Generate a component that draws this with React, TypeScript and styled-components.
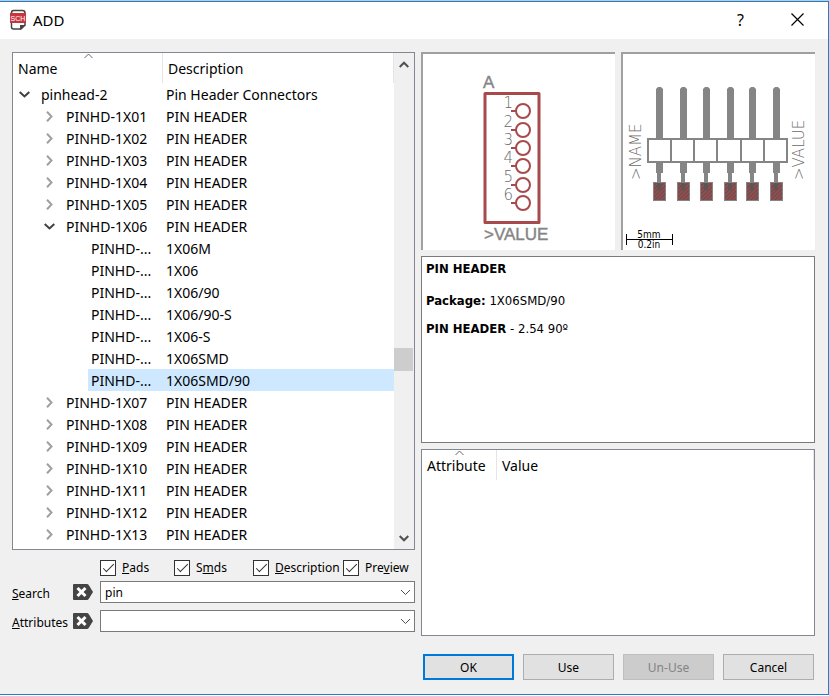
import React, { useState } from 'react';
import styled, { createGlobalStyle, css } from 'styled-components';

const uiFont = '"Noto Sans", "Open Sans", sans-serif';
const infoFont = '"DejaVu Sans Condensed", "DejaVu Sans", sans-serif';

const GlobalStyle = createGlobalStyle`
  *, *::before, *::after { box-sizing: border-box; }
  body { margin: 0; background: #fff; }
  button, input { font: inherit; color: inherit; }
`;

const Dialog = styled.div`
  display: flex;
  flex-direction: column;
  background: #f0f0f0;
  border: solid #1a80d2;
  border-width: 1px 1px 1px 0;
  outline: 1px solid #c8c8c8;
  margin-top: 1px;
  min-height: calc(100vh - 2px);
  font-family: ${uiFont};
  font-size: 12px;
  color: #000;
`;

const TitleBar = styled.header`
  display: flex;
  align-items: center;
  height: 37px;
  padding: 0 2px 2px 9px;
  background: #fff;
`;

const Title = styled.h1`
  flex: 1;
  margin: 0 0 0 6px;
  font: 400 15px/20px ${uiFont};
`;

const CaptionButton = styled.button`
  display: flex;
  align-items: center;
  justify-content: center;
  width: 57px;
  height: 34px;
  padding: 0;
  border: 0;
  background: none;
  font: 400 16px/20px ${uiFont};
`;

const Body = styled.main`
  flex: 1;
  display: grid;
  grid-template-columns: minmax(0, 403fr) minmax(0, 394fr);
  gap: 6px;
  padding: 13px 13px 14px 12px;
`;

const Column = styled.div`
  display: flex;
  flex-direction: column;
  min-width: 0;
`;

const TreePanel = styled.section`
  flex: 1;
  display: flex;
  border: 1px solid #828790;
  background: #fff;
`;

const TreeTable = styled.table`
  flex: 1;
  align-self: flex-start;
  width: calc(100% - 20px);
  table-layout: fixed;
  border-collapse: separate;
  border-spacing: 0;
  font: 400 14px/20px ${uiFont};
`;

const NameCol = styled.col`
  width: 150px;
`;

const HeadCell = styled.th`
  position: relative;
  height: 30px;
  padding: 2px 0 0 5px;
  border-right: 1px solid #e5e5e5;
  text-align: left;
  font-weight: 400;
`;

const SortMark = styled.svg`
  position: absolute;
  top: 0;
  left: calc(50% - 4px);
`;

const Cell = styled.td`
  height: 22px;
  padding: 0;
  white-space: nowrap;
`;

const NameLine = styled.div<{ $level: number }>`
  display: flex;
  align-items: center;
  padding-left: ${p => p.$level * 25}px;
`;

const Toggle = styled.button`
  display: flex;
  align-items: center;
  justify-content: center;
  width: 25px;
  height: 22px;
  padding: 0 2px 0 0;
  border: 0;
  background: none;
`;

const ToggleSpace = styled.span`
  width: 25px;
`;

const CellText = styled.span<{ $selected?: boolean }>`
  display: block;
  flex: 1;
  padding: 2px 0 0 3px;
  ${p => p.$selected && css`background: #cde8ff;`}
`;

const ScrollBar = styled.div`
  display: flex;
  flex-direction: column;
  align-items: center;
  width: 20px;
  background: #f0f0f0;
`;

const ScrollArrow = styled.button`
  display: flex;
  align-items: center;
  justify-content: center;
  width: 20px;
  height: 22px;
  padding: 0;
  border: 0;
  background: none;
`;

const ScrollTrack = styled.div<{ $grow: number }>`
  flex: ${p => p.$grow};
`;

const ScrollThumb = styled.div`
  align-self: stretch;
  height: 23px;
  margin-right: 1px;
  background: #cdcdcd;
`;

const Filters = styled.form`
  display: grid;
  grid-template-columns: 61px 27px minmax(0, 1fr);
  align-items: center;
  row-gap: 7px;
  padding: 9px 0 48px;
`;

const CheckRow = styled.div`
  grid-column: 3;
  display: grid;
  grid-template-columns: 74px 79px 90px auto;
  margin-bottom: -2px;
  line-height: 16px;
`;

const CheckLabel = styled.label`
  display: flex;
  align-items: center;
  gap: 6px;
  white-space: nowrap;
`;

const CheckText = styled.span`
  padding-top: 1px;
`;

const CheckBox = styled.input`
  appearance: none;
  flex: none;
  width: 16px;
  height: 16px;
  margin: 0;
  border: 1px solid #333;
  background: #fff;
  display: grid;
  place-items: center;
  &:checked::before {
    content: '';
    width: 11px;
    height: 5px;
    margin-top: -3px;
    border: solid #333;
    border-width: 0 0 1px 1px;
    transform: rotate(-45deg);
  }
`;

const FieldLabel = styled.label`
  padding-top: 4px;
  line-height: 16px;
`;

const ClearButton = styled.button`
  display: flex;
  padding: 0;
  border: 0;
  background: none;
`;

const Combo = styled.div`
  display: flex;
  height: 22px;
  border: 1px solid #7a7a7a;
  background: #fff;
`;

const ComboInput = styled.input`
  flex: 1;
  min-width: 0;
  padding: 0 4px;
  border: 0;
  outline: 0;
  background: none;
`;

const ComboButton = styled.button`
  display: flex;
  align-items: center;
  justify-content: center;
  width: 18px;
  padding: 0;
  border: 0;
  background: none;
`;

const Previews = styled.div`
  display: grid;
  grid-template-columns: 1fr 1fr;
  gap: 6px;
`;

const Preview = styled.div`
  display: flex;
  height: 198px;
  border: solid #a0a0a0;
  border-width: 2px 0 0 2px;
  background: #fff;
`;

const Drawing = styled.svg`
  width: 100%;
  height: 100%;
`;

const InfoPanel = styled.section`
  flex: 1;
  margin-top: 6px;
  border: 1px solid #7a7a7a;
  background: #fff;
`;

const InfoText = styled.div`
  padding: 4px;
  font: 400 13px/16px ${infoFont};
`;

const InfoLine = styled.p<{ $spaced?: boolean }>`
  margin: 0 0 ${p => (p.$spaced ? 16 : 12)}px;
`;

const AttributePanel = styled.section`
  flex: 1;
  margin-top: 6px;
  border: 1px solid #828790;
  background: #fff;
`;

const AttributeTable = styled.table`
  width: 100%;
  table-layout: fixed;
  border-collapse: separate;
  border-spacing: 0;
  font: 400 14px/20px ${uiFont};
`;

const AttributeCol = styled.col`
  width: 75px;
`;

const Actions = styled.footer`
  display: grid;
  grid-template-columns: repeat(4, 1fr);
  gap: 9px;
  padding: 18px 1px 0 2px;
`;

const ActionButton = styled.button<{ $primary?: boolean }>`
  height: 26px;
  padding: 0;
  border: ${p => (p.$primary ? '2px solid #0078d7' : '1px solid #adadad')};
  background: #e1e1e1;
  &:disabled {
    border-color: #bfbfbf;
    background: #ccc;
    color: #838383;
  }
`;

function SortUp() {
  return (
    <SortMark width="9" height="6" viewBox="0 0 9 6" fill="none" stroke="#666">
      <path d="M.5 5 4.500 1l4 4" />
    </SortMark>
  );
}

function SchematicIcon() {
  return (
    <svg width="18" height="22" viewBox="0 0 18 22">
      <path d="M4.500 1.500h9q2.500 0 2.500 2.500v12l-4 4H4.500Q2.500 20 2.500 18V4q0-2.500 2-2.500z" fill="#fff" stroke="#444" strokeWidth="1.500" />
      <path d="M11 21v-5h6z" fill="#444" />
      <rect x="1" y="4" width="16" height="10" fill="#c8353f" />
      <text x="9" y="12" textAnchor="middle" fontFamily="Liberation Sans" fontSize="7" fill="#fff">SCH</text>
    </svg>
  );
}

function Chevron({ open }: { open: boolean }) {
  return open ? (
    <svg width="11" height="7" viewBox="0 0 11 7" fill="none" stroke="#404040" strokeWidth="2">
      <path d="M.7 1 5.500 5.500 10.300 1" />
    </svg>
  ) : (
    <svg width="7" height="11" viewBox="0 0 7 11" fill="none" stroke="#a0a0a0" strokeWidth="2">
      <path d="M1 .7 5.500 5.500 1 10.300" />
    </svg>
  );
}

function ScrollGlyph({ down }: { down?: boolean }) {
  return (
    <svg width="10" height="7" viewBox="0 0 10 7" fill="none" stroke="#505050" strokeWidth="2">
      <path d={down ? 'M.7 1 5 5.300 9.300 1' : 'M.7 6 5 1.700 9.300 6'} />
    </svg>
  );
}

function ClearGlyph() {
  return (
    <svg width="20" height="16" viewBox="0 0 20 16">
      <path d="M1 0h13q1 0 1.700 1L20 8l-4.300 7q-.7 1-1.700 1H1q-1 0-1-1V1q0-1 1-1z" fill="#444" />
      <path d="m4.500 4 8 8m0-8-8 8" stroke="#fff" strokeWidth="3" />
    </svg>
  );
}

const ink = '#858585';
const fineInk = '#6a6a6a';
const symbolPins = [57, 76, 94, 112, 131, 149];
const padCentres = [36, 60, 83, 107, 129, 153];

function SymbolDrawing() {
  return (
    <Drawing viewBox="0 0 192 196" role="img" aria-label="Schematic symbol">
      <g fontFamily="Liberation Sans" fontSize="17" fill={ink} stroke={ink} strokeWidth=".4">
        <text x="60" y="34">A</text>
        <text x="61" y="186">&gt;VALUE</text>
      </g>
      <g fill="none" stroke="#a84a4c">
        <rect x="62" y="39.500" width="54" height="129" strokeWidth="3" strokeLinejoin="round" />
        {symbolPins.map(y => (
          <g key={y} strokeWidth="2">
            <circle cx="100" cy={y} r="7" />
            <path d={`M88 ${y}h5`} />
          </g>
        ))}
      </g>
      <g fontFamily="DejaVu Sans" fontWeight="200" fontSize="15" fill={fineInk} textAnchor="end">
        {symbolPins.map((y, i) => (
          <text key={y} x="90" y={y - 3}>{i + 1}</text>
        ))}
      </g>
    </Drawing>
  );
}

function FootprintDrawing() {
  return (
    <Drawing viewBox="0 0 192 196" role="img" aria-label="Package footprint">
      <defs>
        <pattern id="hatch" width="4" height="4" patternUnits="userSpaceOnUse">
          <rect width="4" height="4" fill="#5c5455" />
          <path d="M-1 5 5-1M-1 1 1-1M3 5 5 3" stroke="#b04446" strokeWidth="1.300" />
        </pattern>
      </defs>
      {padCentres.map(x => (
        <g key={x} fill={ink}>
          <path d={`M${x - 3} 84V35l2-2h3l2 2v49z`} />
          <rect x={x - 3} y="109" width="7" height="10" />
          <rect x={x - 2} y="119" width="4" height="10" />
          <rect x={x - 5.5} y="128.500" width="12" height="18" fill="url(#hatch)" stroke={ink} />
          <rect x={x - 2} y="129" width="4" height="7" fill="#5c5455" />
        </g>
      ))}
      <path d="M25 85h139v23H25zM48 85v23M71 85v23M94 85v23M118 85v23M141 85v23" fill="#fff" stroke={ink} strokeWidth="2" />
      <g fontFamily="DejaVu Sans" fontWeight="200" fontSize="15" fill={fineInk}>
        <text transform="translate(18 126) rotate(-90)">&gt;NAME</text>
        <text transform="translate(181 126) rotate(-90)">&gt;VALUE</text>
      </g>
      <path d="M3.500 180v11M49.500 180v11M3 185.500h47" stroke="#000" />
      <g fontFamily="DejaVu Sans Condensed" fontSize="10" textAnchor="middle">
        <text x="26" y="184">5mm</text>
        <text x="26" y="194">0.2in</text>
      </g>
    </Drawing>
  );
}

type Row = { name: string; description: string; level: number; open?: boolean; selected?: boolean };

const part = (n: string, open = false): Row => ({ name: `PINHD-1X${n}`, description: 'PIN HEADER', level: 1, open });
const variant = (v: string, selected = false): Row => ({ name: 'PINHD-...', description: v, level: 2, selected });

const rows: Row[] = [
  { name: 'pinhead-2', description: 'Pin Header Connectors', level: 0, open: true },
  ...['01', '02', '03', '04', '05'].map(n => part(n)),
  part('06', true),
  ...['1X06M', '1X06', '1X06/90', '1X06/90-S', '1X06-S', '1X06SMD'].map(v => variant(v)),
  variant('1X06SMD/90', true),
  ...['07', '08', '09', '10', '11', '12', '13'].map(n => part(n)),
];

function Check({ children }: { children: React.ReactNode }) {
  return (
    <CheckLabel>
      <CheckBox type="checkbox" defaultChecked />
      <CheckText>{children}</CheckText>
    </CheckLabel>
  );
}

function SearchField({ id, label, initial }: { id: string; label: string; initial: string }) {
  const [value, setValue] = useState(initial);
  return (
    <>
      <FieldLabel htmlFor={id}><u>{label[0]}</u>{label.slice(1)}</FieldLabel>
      <ClearButton type="button" aria-label={`Clear ${label}`} onClick={() => setValue('')}><ClearGlyph /></ClearButton>
      <Combo>
        <ComboInput id={id} value={value} onChange={e => setValue(e.target.value)} />
        <ComboButton type="button" aria-label={`${label} history`}>
          <svg width="11" height="7" viewBox="0 0 11 7" fill="none" stroke="#505050">
            <path d="M1 1 5.500 5.500 10 1" />
          </svg>
        </ComboButton>
      </Combo>
    </>
  );
}

export default function App() {
  return (
    <>
      <GlobalStyle />
      <Dialog role="dialog" aria-labelledby="dialog-title">
        <TitleBar>
          <SchematicIcon />
          <Title id="dialog-title">ADD</Title>
          <CaptionButton aria-label="Help">?</CaptionButton>
          <CaptionButton aria-label="Close">
            <svg width="13" height="13" viewBox="0 0 13 13" stroke="#000" strokeWidth="1.200">
              <path d="m.5.5 12 12m0-12-12 12" />
            </svg>
          </CaptionButton>
        </TitleBar>
        <Body>
          <Column>
            <TreePanel>
              <TreeTable>
                <colgroup><NameCol /><col /></colgroup>
                <thead>
                  <tr>
                    <HeadCell>Name<SortUp /></HeadCell>
                    <HeadCell>Description</HeadCell>
                  </tr>
                </thead>
                <tbody>
                  {rows.map(r => (
                    <tr key={r.name + r.description} aria-selected={r.selected}>
                      <Cell>
                        <NameLine $level={r.level}>
                          {r.level < 2 ? (
                            <Toggle aria-label={`Toggle ${r.name}`} aria-expanded={r.open}><Chevron open={!!r.open} /></Toggle>
                          ) : (
                            <ToggleSpace />
                          )}
                          <CellText $selected={r.selected}>{r.name}</CellText>
                        </NameLine>
                      </Cell>
                      <Cell><CellText $selected={r.selected}>{r.description}</CellText></Cell>
                    </tr>
                  ))}
                </tbody>
              </TreeTable>
              <ScrollBar>
                <ScrollArrow aria-label="Scroll up"><ScrollGlyph /></ScrollArrow>
                <ScrollTrack $grow={274} />
                <ScrollThumb />
                <ScrollTrack $grow={156} />
                <ScrollArrow aria-label="Scroll down"><ScrollGlyph down /></ScrollArrow>
              </ScrollBar>
            </TreePanel>
            <Filters onSubmit={e => e.preventDefault()}>
              <CheckRow>
                <Check><u>P</u>ads</Check>
                <Check>S<u>m</u>ds</Check>
                <Check><u>D</u>escription</Check>
                <Check>Pre<u>v</u>iew</Check>
              </CheckRow>
              <SearchField id="search" label="Search" initial="pin" />
              <SearchField id="attributes" label="Attributes" initial="" />
            </Filters>
          </Column>
          <Column>
            <Previews>
              <Preview><SymbolDrawing /></Preview>
              <Preview><FootprintDrawing /></Preview>
            </Previews>
            <InfoPanel>
              <InfoText>
                <InfoLine $spaced><b>PIN HEADER</b></InfoLine>
                <InfoLine><b>Package:</b> 1X06SMD/90</InfoLine>
                <InfoLine><b>PIN HEADER</b> - 2.54 90º</InfoLine>
              </InfoText>
            </InfoPanel>
            <AttributePanel>
              <AttributeTable>
                <colgroup><AttributeCol /><col /></colgroup>
                <thead>
                  <tr>
                    <HeadCell>Attribute<SortUp /></HeadCell>
                    <HeadCell>Value</HeadCell>
                  </tr>
                </thead>
              </AttributeTable>
            </AttributePanel>
            <Actions>
              <ActionButton $primary>OK</ActionButton>
              <ActionButton>Use</ActionButton>
              <ActionButton disabled>Un-Use</ActionButton>
              <ActionButton>Cancel</ActionButton>
            </Actions>
          </Column>
        </Body>
      </Dialog>
    </>
  );
}
